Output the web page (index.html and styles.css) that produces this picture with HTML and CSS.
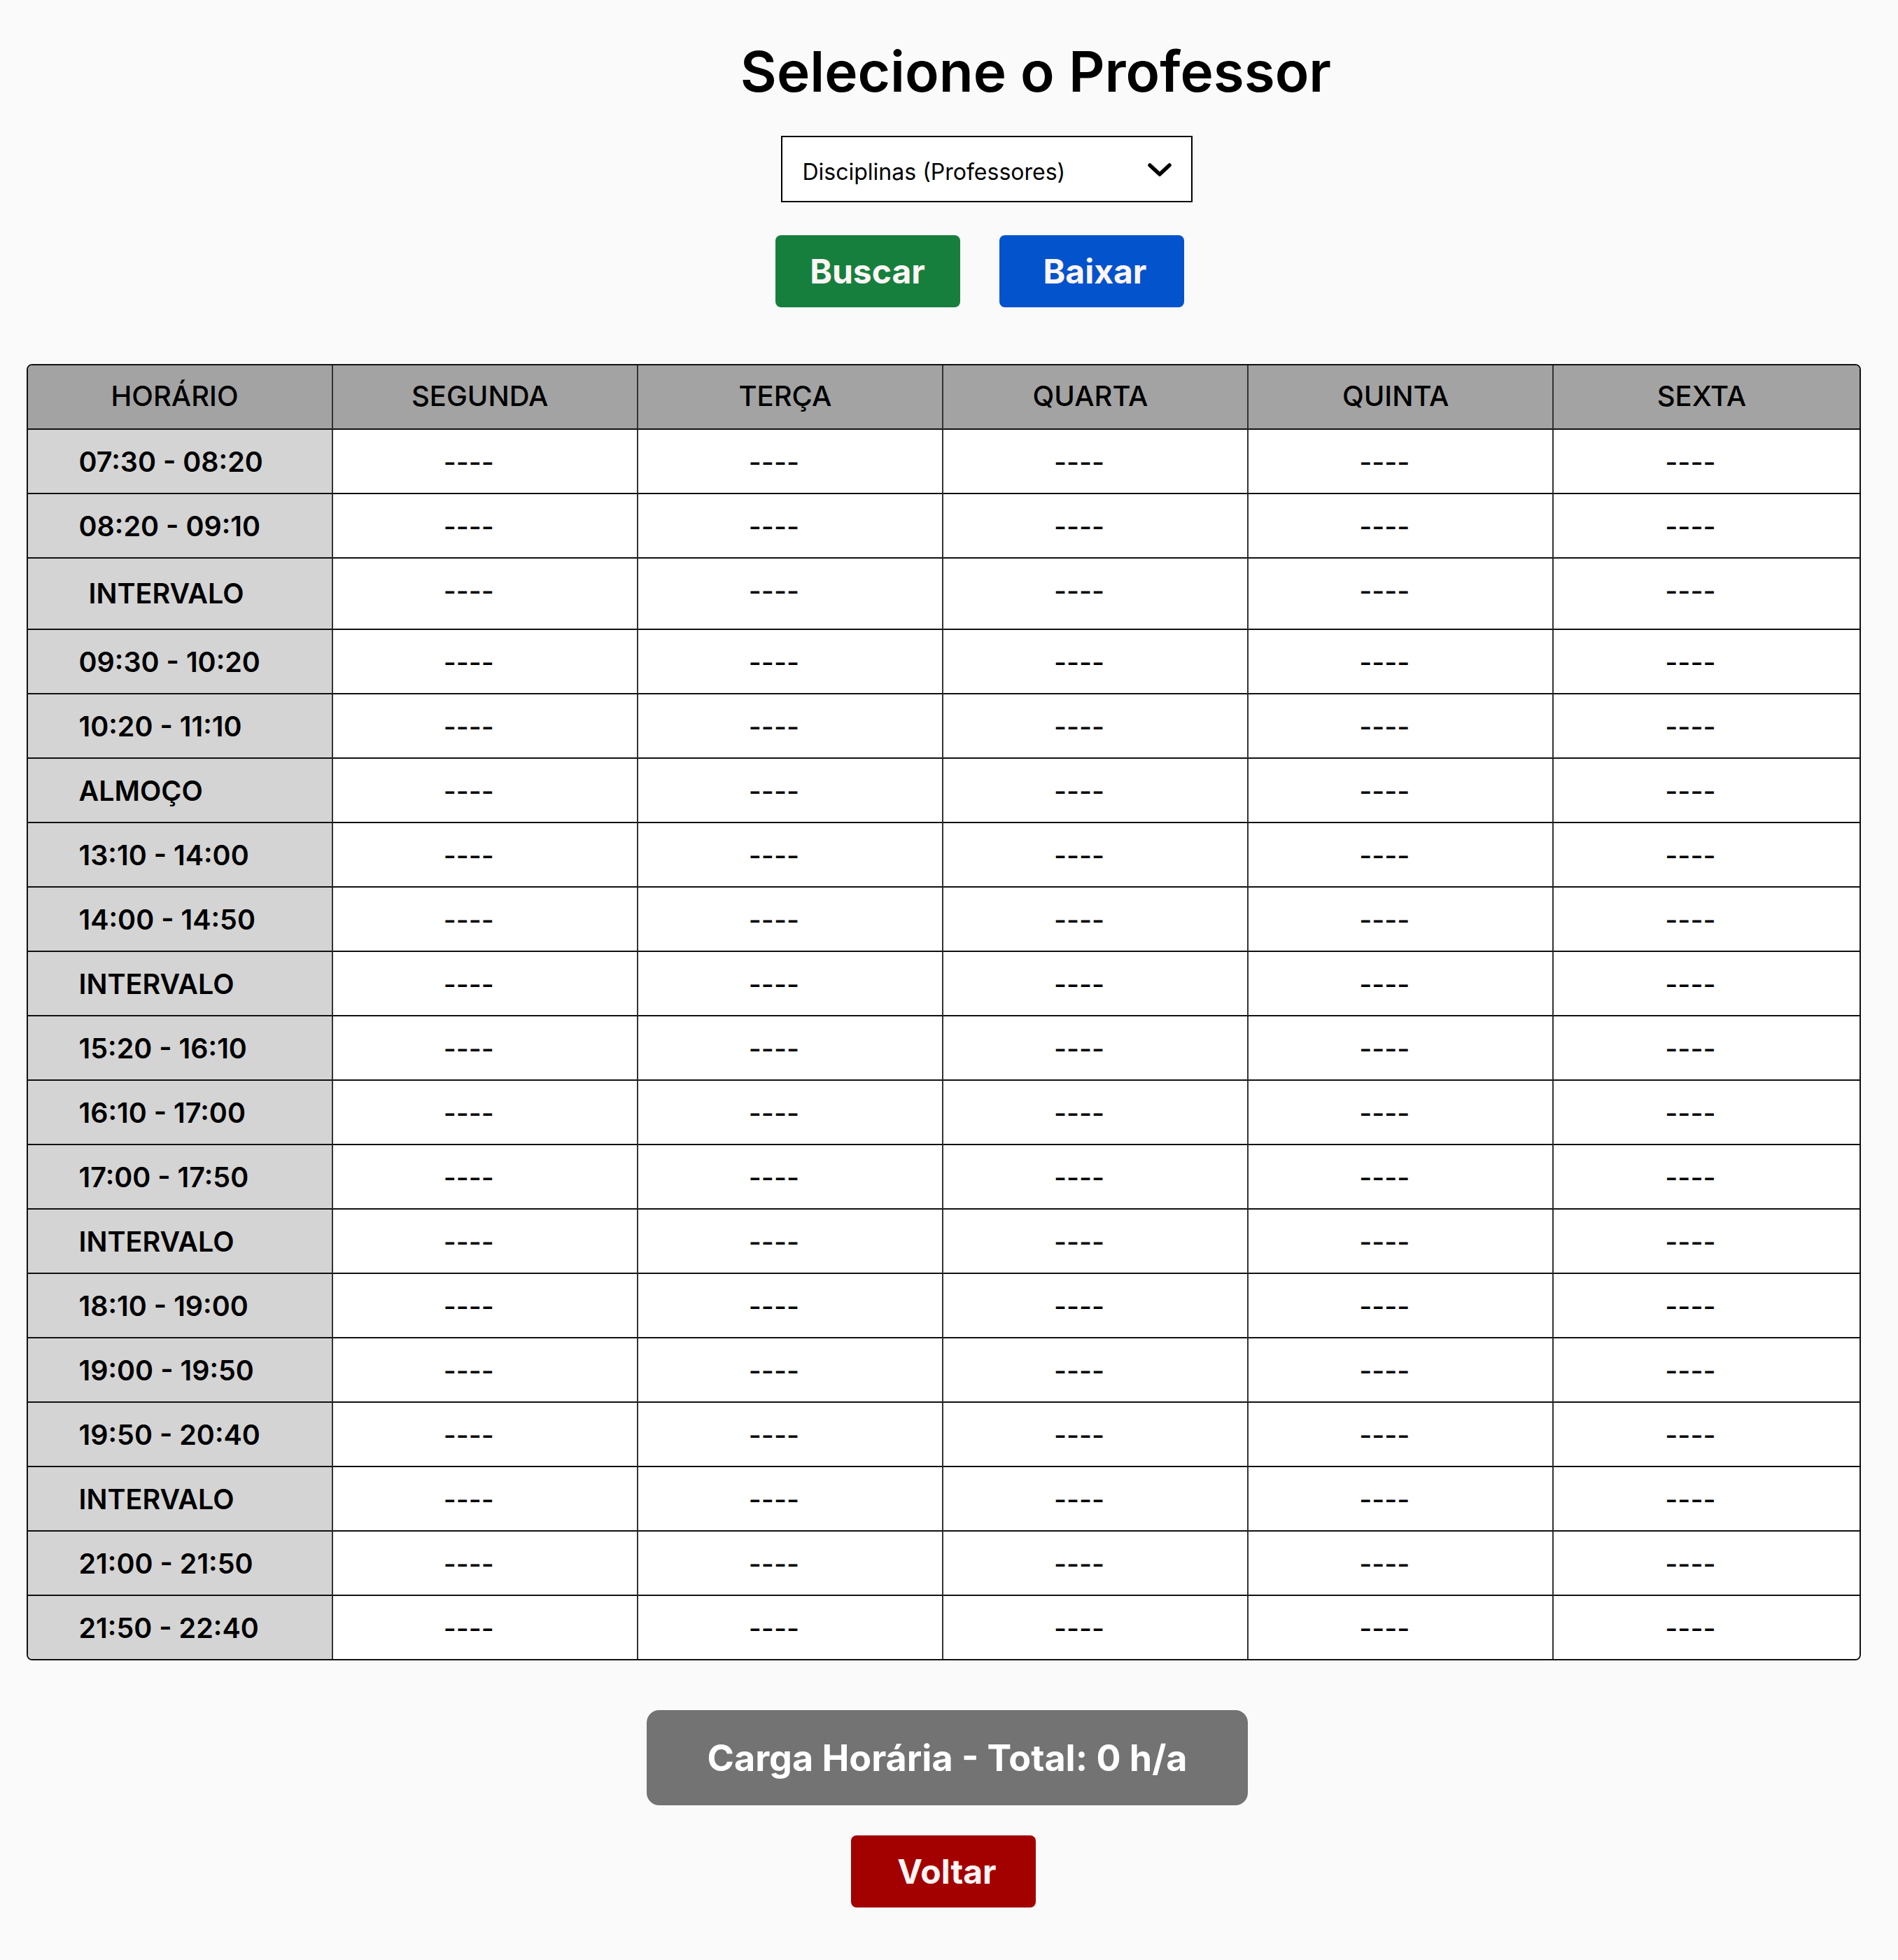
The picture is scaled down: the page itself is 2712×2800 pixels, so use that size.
FILE: index.html
```html
<!DOCTYPE html>
<html lang="pt-BR">
<head>
<meta charset="utf-8">
<title>Selecione o Professor</title>
<link rel="stylesheet" href="styles.css">
</head>
<body>
<main class="page">
  <h1 class="title">Selecione o Professor</h1>
  <div class="select">
    <span class="select-label">Disciplinas (Professores)</span>
    <svg class="chevron" width="34" height="19" viewBox="0 0 34 19"><polyline points="3,3 17,16 31,3" fill="none" stroke="#000" stroke-width="5.5" stroke-linecap="round" stroke-linejoin="round"/></svg>
  </div>
  <div class="actions">
    <button class="btn btn-green">Buscar</button>
    <button class="btn btn-blue">Baixar</button>
  </div>
  <div class="table-wrap">
    <table class="grade">
      <thead>
        <tr><th>HORÁRIO</th><th>SEGUNDA</th><th>TERÇA</th><th>QUARTA</th><th>QUINTA</th><th>SEXTA</th></tr>
      </thead>
      <tbody>
        <tr><td class="time">07:30 - 08:20</td><td>----</td><td>----</td><td>----</td><td>----</td><td>----</td></tr>
        <tr><td class="time">08:20 - 09:10</td><td>----</td><td>----</td><td>----</td><td>----</td><td>----</td></tr>
        <tr><td class="time first-break">INTERVALO</td><td>----</td><td>----</td><td>----</td><td>----</td><td>----</td></tr>
        <tr><td class="time">09:30 - 10:20</td><td>----</td><td>----</td><td>----</td><td>----</td><td>----</td></tr>
        <tr><td class="time">10:20 - 11:10</td><td>----</td><td>----</td><td>----</td><td>----</td><td>----</td></tr>
        <tr><td class="time">ALMOÇO</td><td>----</td><td>----</td><td>----</td><td>----</td><td>----</td></tr>
        <tr><td class="time">13:10 - 14:00</td><td>----</td><td>----</td><td>----</td><td>----</td><td>----</td></tr>
        <tr><td class="time">14:00 - 14:50</td><td>----</td><td>----</td><td>----</td><td>----</td><td>----</td></tr>
        <tr><td class="time">INTERVALO</td><td>----</td><td>----</td><td>----</td><td>----</td><td>----</td></tr>
        <tr><td class="time">15:20 - 16:10</td><td>----</td><td>----</td><td>----</td><td>----</td><td>----</td></tr>
        <tr><td class="time">16:10 - 17:00</td><td>----</td><td>----</td><td>----</td><td>----</td><td>----</td></tr>
        <tr><td class="time">17:00 - 17:50</td><td>----</td><td>----</td><td>----</td><td>----</td><td>----</td></tr>
        <tr><td class="time">INTERVALO</td><td>----</td><td>----</td><td>----</td><td>----</td><td>----</td></tr>
        <tr><td class="time">18:10 - 19:00</td><td>----</td><td>----</td><td>----</td><td>----</td><td>----</td></tr>
        <tr><td class="time">19:00 - 19:50</td><td>----</td><td>----</td><td>----</td><td>----</td><td>----</td></tr>
        <tr><td class="time">19:50 - 20:40</td><td>----</td><td>----</td><td>----</td><td>----</td><td>----</td></tr>
        <tr><td class="time">INTERVALO</td><td>----</td><td>----</td><td>----</td><td>----</td><td>----</td></tr>
        <tr><td class="time">21:00 - 21:50</td><td>----</td><td>----</td><td>----</td><td>----</td><td>----</td></tr>
        <tr><td class="time">21:50 - 22:40</td><td>----</td><td>----</td><td>----</td><td>----</td><td>----</td></tr>
      </tbody>
    </table>
  </div>
  <div class="total">Carga Horária - Total: 0 h/a</div>
  <button class="btn btn-red">Voltar</button>
</main>
</body>
</html>
```
FILE: styles.css
```css
* { box-sizing: border-box; }
html, body {
  margin: 0;
  padding: 0;
  background: #fafafa;
}
body {
  font-family: Inter, "Noto Sans", sans-serif;
  color: #000;
}
.page {
  display: flex;
  flex-direction: column;
  align-items: center;
  padding-bottom: 60px;
}
.title {
  margin: 53px 0 0 248px;
  font-size: 80px;
  line-height: 97px;
  font-weight: 600;
}
.select {
  margin: 44px 0 0 107px;
  width: 588px;
  height: 95px;
  border: 2px solid #000;
  background: #fff;
  display: flex;
  align-items: center;
  justify-content: space-between;
  padding: 0 28px 0 29px;
}
.select-label {
  font-size: 32px;
  font-weight: 400;
  margin-top: 8px;
}
.chevron { display: block; margin-top: 2px; }
.actions {
  margin: 47px 0 0 87px;
  display: flex;
  gap: 56px;
}
.btn {
  border: none;
  width: 264px;
  height: 103px;
  border-radius: 8px;
  font-family: Inter, "Noto Sans", sans-serif;
  font-size: 48px;
  font-weight: 700;
  color: #fff5f5;
  padding: 0;
}
.btn-green { background: #177f3e; }
.btn-blue { background: #0353cc; padding-left: 10px; }
.btn-red { background: #a30000; margin: 43px 16px 0 0; padding-left: 10px; }
.table-wrap {
  margin: 81px 16px 0 0;
  width: 2621px;
  border: 2px solid #111;
  border-radius: 8px;
  overflow: hidden;
}
.grade {
  width: 100%;
  table-layout: fixed;
  border-collapse: separate;
  border-spacing: 0;
}
.grade th, .grade td {
  line-height: 44px;
  border-right: 2px solid #333;
  border-bottom: 2px solid #111;
  text-align: center;
  vertical-align: top;
  white-space: nowrap;
}
.grade th:last-child, .grade td:last-child { border-right: none; }
.grade tbody tr:last-child td { border-bottom: none; height: 89px; }
.grade th {
  background: #a3a3a3;
  font-size: 40px;
  font-weight: 500;
  padding: 22px 14px 24px 0;
  height: 92px;
}
.grade td {
  background: #fff;
  font-size: 39px;
  font-weight: 500;
  padding: 24px 46px 22px 0;
  height: 92px;
}
.grade td.time {
  background: #d4d4d4;
  font-size: 39.5px;
  font-weight: 600;
  text-align: left;
  padding: 24px 0 22px 73px;
}
.grade td.time.first-break {
  padding: 28px 0 28px 87px;
  height: 102px;
}
.total {
  margin: 71px 5px 0 0;
  width: 859px;
  height: 136px;
  border-radius: 18px;
  background: #737373;
  color: #fff;
  font-size: 52px;
  font-weight: 700;
  display: flex;
  align-items: center;
  justify-content: center;
}
```
